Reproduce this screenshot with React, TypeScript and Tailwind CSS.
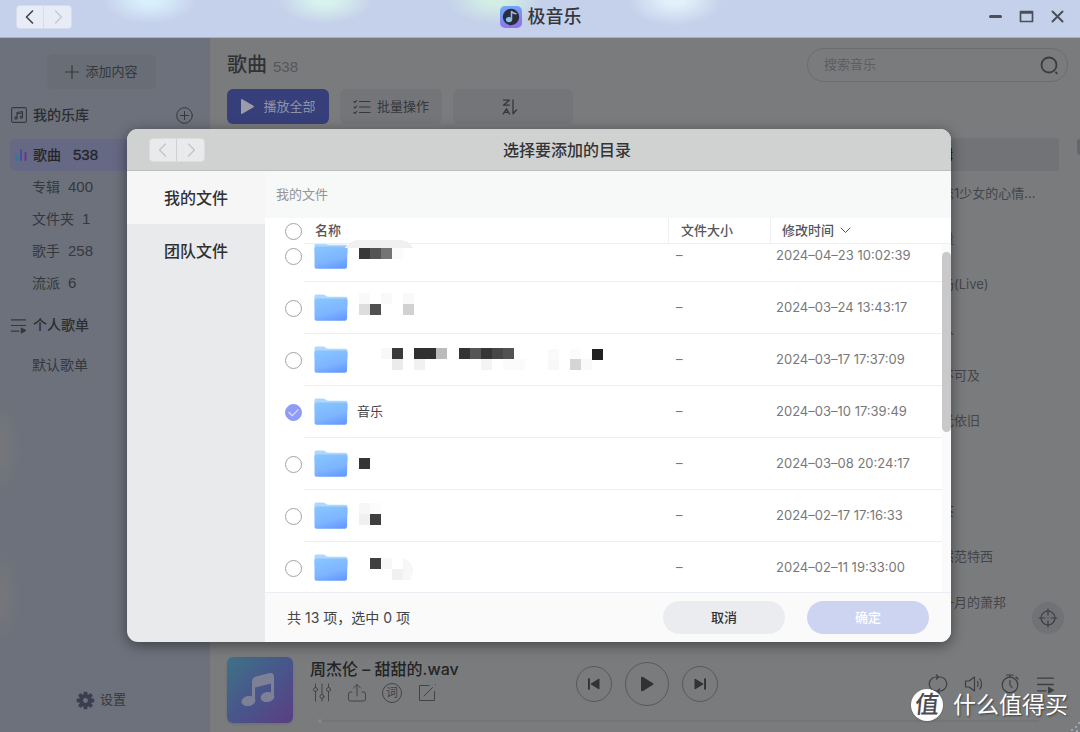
import { useEffect, useRef, type ReactNode } from "react";

type Cell = [x: number, y: number, w: number, fill: string];

interface Folder {
  modified: string;
  name?: string;
  checked?: boolean;
  mask?: Cell[];
  shape?: { d: string; fill: string };
}

const folders: Folder[] = [
  {
    modified: "2024–04–23 10:02:39",
    mask: [[11, 6, 11, "#383838"], [22, 6, 11, "#545454"], [33, 6, 11, "#747474"], [44, 6, 11, "#fbfbfb"]],
    shape: { d: "M-3 6C1 0 5-2 12-2H50C58-2 63 1 65 6Z", fill: "#f0f0f0" },
  },
  {
    modified: "2024–03–24 13:43:17",
    mask: [
      [11, -1, 11, "#f9f9f9"], [33, -1, 11, "#f9f9f9"], [55, -1, 11, "#f9f9f9"],
      [11, 10, 11, "#dddddd"], [22, 10, 11, "#505050"], [55, 10, 11, "#d1d1d1"],
    ],
  },
  {
    modified: "2024–03–17 17:37:09",
    mask: [
      [33, 2, 11, "#f8f8f8"], [44, 2, 11, "#3a3a3a"], [66, 2, 22, "#303030"], [88, 2, 11, "#bbbbbb"],
      [111, 2, 11, "#333333"], [122, 2, 11, "#565656"], [133, 2, 11, "#363636"], [144, 2, 11, "#474747"], [155, 2, 11, "#525252"],
      [200, 3, 11, "#fafafa"], [222, 3, 11, "#fcfcfc"], [244, 3, 11, "#222222"],
      [44, 13, 11, "#ebebeb"], [66, 13, 11, "#f1f1f1"], [133, 13, 11, "#f4f4f4"], [155, 13, 22, "#fbfbfb"],
      [200, 13, 11, "#f8f8f8"], [222, 13, 11, "#d5d5d5"], [233, 13, 11, "#f9f9f9"],
    ],
  },
  { modified: "2024–03–10 17:39:49", name: "音乐", checked: true },
  { modified: "2024–03–08 20:24:17", mask: [[11, 8, 11, "#353535"]] },
  {
    modified: "2024–02–17 17:16:33",
    mask: [[11, 1, 11, "#f7f7f7"], [22, 1, 11, "#fcfcfc"], [11, 12, 11, "#f0f0f0"], [22, 12, 11, "#3f3f3f"]],
  },
  {
    modified: "2024–02–11 19:33:00",
    mask: [[22, 4, 11, "#404040"], [33, 4, 11, "#f7f7f7"], [44, 15, 11, "#f1f1f1"]],
    shape: { d: "M55 4Q63 6 65 15V19L62 26H55Z", fill: "#f7f7f7" },
  },
];

const albums = ["初恋1少女的心情…", "琴量", "现场(Live)", "美人", "遥不可及", "风光依旧", "", "红茶", "依然范特西", "十一月的萧邦"];

const library = [
  ["专辑", "400"],
  ["文件夹", "1"],
  ["歌手", "258"],
  ["流派", "6"],
];

function Icon({ size, box = 20, width = 1, className = "", children }: { size: number; box?: number; width?: number; className?: string; children: ReactNode }) {
  return (
    <svg width={size} height={size} viewBox={`0 0 ${box} ${box}`} fill="none" stroke="currentColor" strokeWidth={width} strokeLinecap="round" strokeLinejoin="round" aria-hidden="true" className={`shrink-0 ${className}`}>
      {children}
    </svg>
  );
}

function PlaylistIcon({ size }: { size: number }) {
  return (
    <Icon size={size} box={18} width={1.2}>
      <path d="M1.500 3H16.500M1.500 9H16.500M1.500 15H9.500" />
      <path d="M12 11.800V17L16.500 14.400Z" fill="currentColor" />
    </Icon>
  );
}

function FolderIcon({ id }: { id: string }) {
  return (
    <svg width="34" height="27" viewBox="0 0 34 27" className="shrink-0" aria-hidden="true">
      <defs>
        <linearGradient id={id} x1="0.3" y1="0" x2="0.7" y2="1">
          <stop offset="0" stopColor="#86c4ff" />
          <stop offset="0.6" stopColor="#7eb5ff" />
          <stop offset="1" stopColor="#649aff" />
        </linearGradient>
      </defs>
      <path d="M0.500 2Q0.500 0.500 2 0.500H9.500Q10.500 0.500 11.500 1.500T14 2.700H31.500Q33.500 2.700 33.500 4.500V12H0.500Z" fill="#afd7fe" />
      <path d="M0.500 6.500Q0.500 4.500 2.500 4.500H31.500Q33.500 4.500 33.500 6.500L33 24.500Q33 26.800 31 26.800H2.500Q0.500 26.800 0.500 24.800Z" fill={`url(#${id})`} />
    </svg>
  );
}

function HistoryButtons({ active }: { active?: boolean }) {
  return (
    <div className={`flex h-6 w-fit overflow-hidden rounded border ${active ? "border-[#d6dcea] bg-[#e7ecf7]" : "border-[#dcdcde] bg-[#e9eaec]"}`}>
      <button aria-label="后退" className={`flex w-[27px] items-center justify-center border-r ${active ? "border-[#d6dcea] text-[#45484e]" : "border-[#cfd0d2] text-[#c2c3c5]"}`}>
        <Icon size={16} box={16} width={active ? 1.7 : 1.2}><path d="M10.500 2L4.500 8L10.500 14" /></Icon>
      </button>
      <button aria-label="前进" className={`flex w-[27px] items-center justify-center ${active ? "text-[#c3c7cf]" : "text-[#c2c3c5]"}`}>
        <Icon size={16} box={16} width={1.2}><path d="M5.500 2L11.500 8L5.500 14" /></Icon>
      </button>
    </div>
  );
}

function TitleBar() {
  return (
    <header className="grid h-[38px] shrink-0 grid-cols-[1fr_auto_1fr] items-center border-b border-[#a9b0bf] bg-[#c5d0ea] bg-[radial-gradient(ellipse_48px_24px_at_150px_0px,#d9effd_20%,transparent),radial-gradient(ellipse_48px_24px_at_325px_0px,#d8f3ee_20%,transparent),radial-gradient(ellipse_48px_24px_at_495px_0px,#d3eee5_20%,transparent),radial-gradient(ellipse_48px_26px_at_675px_0px,#e2f0fa_20%,transparent)] pb-1 pl-4 pr-[15px]">
      <HistoryButtons active />
      <div className="flex items-center gap-1.5">
        <svg width="22" height="22" viewBox="0 0 22 22" aria-hidden="true">
          <defs>
            <linearGradient id="logo-bg" x1="0" y1="0" x2="0.3" y2="1">
              <stop offset="0" stopColor="#69b2fa" />
              <stop offset="1" stopColor="#8d74ec" />
            </linearGradient>
            <linearGradient id="logo-note" x1="0" y1="1" x2="1" y2="0">
              <stop offset="0" stopColor="#48d8e0" />
              <stop offset="0.45" stopColor="#7bc8f5" />
              <stop offset="1" stopColor="#ff8fa6" />
            </linearGradient>
          </defs>
          <rect width="22" height="22" rx="5" fill="url(#logo-bg)" />
          <circle cx="11" cy="11" r="8.200" fill="#2d2b40" />
          <ellipse cx="9" cy="13.600" rx="3.100" ry="2.700" fill="url(#logo-note)" />
          <path d="M11.500 13.500V5.500Q13 7.500 16 7.800" fill="none" stroke="url(#logo-note)" strokeWidth="1.500" strokeLinecap="round" strokeLinejoin="round" />
        </svg>
        <h1 className="text-lg leading-6 font-medium text-[#34373c]">极音乐</h1>
      </div>
      <div className="flex items-center justify-end gap-4 text-[#4a4f59]">
        <button aria-label="最小化"><Icon size={15} box={15} width={3}><path d="M2.500 7.500H12.500" /></Icon></button>
        <button aria-label="最大化"><Icon size={15} box={15} width={1.700}><path d="M1.500 2.500H13.500V12.500H1.500ZM1.500 3.800H13.500" /></Icon></button>
        <button aria-label="关闭"><Icon size={15} box={15} width={2}><path d="M2.500 2.500L12.500 12.500M12.500 2.500L2.500 12.500" /></Icon></button>
      </div>
    </header>
  );
}

function Sidebar() {
  return (
    <aside className="flex w-[210px] shrink-0 flex-col bg-[#6c717b] bg-[radial-gradient(ellipse_22px_50px_at_0px_410px,#74767a_20%,transparent),radial-gradient(ellipse_22px_50px_at_0px_560px,#74767a_20%,transparent)] pt-4 text-[#35383d]">
      <button className="ml-[47px] flex h-[35px] w-[109px] items-center justify-center gap-1.5 rounded-md bg-[#686d76] text-[13px]">
        <Icon size={14} box={14} width={1.2}><path d="M7 0.600V13.400M0.600 7H13.400" /></Icon>
        添加内容
      </button>
      <div className="mt-[14px] flex h-6 items-center pl-[11px] pr-[17px]">
        <Icon size={16} box={16} width={1.1}>
          <rect x="0.600" y="0.600" width="14.800" height="14.800" rx="1.500" />
          <path d="M6 11V5.500L11.500 4.500V10M6 7L11.500 6" />
          <circle cx="4.900" cy="11" r="1.100" />
          <circle cx="10.400" cy="10.200" r="1.100" />
        </Icon>
        <h2 className="ml-1.5 flex-1 text-sm font-medium text-[#2b2d31]">我的乐库</h2>
        <button aria-label="新建">
          <Icon size={17} box={17}><circle cx="8.500" cy="8.500" r="7.800" /><path d="M8.500 4.500V12.500M4.500 8.500H12.500" /></Icon>
        </button>
      </div>
      <nav className="mt-3 flex flex-col">
        <a href="#songs" className="mx-2.5 flex h-8 items-center rounded-md bg-[#656984] pl-[5px] text-sm font-medium text-[#232529]">
          <svg width="12" height="12" viewBox="0 0 12 12" className="shrink-0 overflow-visible" aria-hidden="true">
            <path d="M1.500 6.500V11" stroke="#277e99" strokeWidth="2" strokeLinecap="round" />
            <path d="M6 1V11" stroke="#4550a5" strokeWidth="2" strokeLinecap="round" />
            <path d="M10.500 4V11" stroke="#6d3095" strokeWidth="2" strokeLinecap="round" />
          </svg>
          <span className="ml-1.5">歌曲</span>
          <span className="ml-3 font-['Liberation_Sans',sans-serif] text-[15px] [-webkit-text-stroke:0.3px]">538</span>
        </a>
        {library.map(([label, count]) => (
          <a key={label} href={`#${label}`} className="flex h-8 items-center gap-2 pl-8 text-sm">
            <span>{label}</span>
            <span className="font-['Liberation_Sans',sans-serif] text-[15px]">{count}</span>
          </a>
        ))}
      </nav>
      <div className="mt-3 flex h-7 items-center gap-1.5 pl-2.5">
        <PlaylistIcon size={17} />
        <h2 className="text-sm font-medium text-[#2b2d31]">个人歌单</h2>
      </div>
      <a href="#default" className="mt-3 flex h-7 items-center pl-8 text-sm">默认歌单</a>
      <button className="mt-auto mb-5 flex h-6 items-center gap-[5px] pl-[76px] text-[13px]">
        <svg width="19" height="19" viewBox="-10 -10 20 20" fill="#3b3d50" aria-hidden="true">
          <circle r="4.700" fill="none" stroke="#3b3d50" strokeWidth="4.200" />
          {[0, 45, 90, 135, 180, 225, 270, 315].map((angle) => (
            <rect key={angle} x="-2" y="-9.300" width="4" height="4" rx="1.200" transform={`rotate(${angle})`} />
          ))}
        </svg>
        设置
      </button>
    </aside>
  );
}

function SongList() {
  return (
    <section className="relative flex flex-1 flex-col pl-[17px]">
      <div className="mt-2.5 flex h-[34px] items-center justify-between pr-3">
        <div className="flex items-baseline gap-1.5">
          <h2 className="text-xl font-medium text-[#303234]">歌曲</h2>
          <span className="font-['Liberation_Sans',sans-serif] text-[15px] text-[#55575b]">538</span>
        </div>
        <label className="flex h-[34px] w-[261px] items-center rounded-full border border-[#6c6d70] pl-4 pr-2 text-[#3a3c3f]">
          <input type="text" aria-label="搜索音乐" placeholder="搜索音乐" className="min-w-0 flex-1 bg-transparent text-[13px] outline-none placeholder:text-[#5c5e62]" />
          <Icon size={19} box={19} width={1.800}><circle cx="9" cy="9" r="7.500" /><path d="M16 16.500L16.800 17.300" /></Icon>
        </label>
      </div>
      <div className="mt-[7px] flex gap-[11px] text-[13px] text-[#35373a]">
        <button className="flex h-[35px] w-[102px] items-center justify-center gap-2 rounded-md bg-[#363f79] text-[#8e92a8]">
          <svg width="15" height="17" viewBox="0 0 15 17" fill="#9a9ca8" aria-hidden="true"><path d="M1 2Q1 .6 2.300 1.200L13.500 7.800Q14.500 8.500 13.500 9.200L2.300 15.800Q1 16.400 1 15Z" /></svg>
          播放全部
        </button>
        <button className="flex h-[35px] w-[102px] items-center justify-center gap-1.5 rounded-md bg-[#737579]">
          <Icon size={18} box={18} width={1.1}>
            <path d="M6.500 3.500H17M6.500 9H17M6.500 14.500H17M1 3.500L2 4.500L3.800 2.500M1 9L2 10L3.800 8M1 14.500L2 15.500L3.800 13.500" />
          </Icon>
          批量操作
        </button>
        <button aria-label="排序" className="flex h-[35px] w-[120px] items-center justify-center rounded-md bg-[#737579] pr-1.5">
          <Icon size={16} box={16} width={1.3}>
            <path d="M1.500 1.200H7.300L1.500 6.200H7.300M1.200 15L4.400 9.800L7.600 15M2.600 13.300H6.200M11 1V14.800L14.500 11" />
          </Icon>
        </button>
      </div>
      <div className="mt-[14px] mr-[21px] h-[33px] rounded-sm bg-[#727376] pr-[106px] text-right text-[13px] leading-[33px]">专辑</div>
      <ul className="flex flex-1 flex-col pr-[41px] text-[13px] text-[#44464a]">
        {albums.map((album, i) => (
          <li key={i} className="flex flex-1 items-center justify-end"><span className="w-[111px] whitespace-nowrap">{album}</span></li>
        ))}
      </ul>
      <div className="absolute top-[101px] right-0 h-4 w-[3px] rounded-l bg-[#66676a]" />
      <button aria-label="定位当前歌曲" className="absolute right-4 bottom-[-9px] flex size-8 items-center justify-center rounded-full bg-[#717276] text-[#3b3d42]">
        <Icon size={20} width={1.2}><circle cx="10" cy="10" r="7" /><path d="M10 1V7M10 13V19M1 10H7M13 10H19M10 10V10.100" /></Icon>
      </button>
    </section>
  );
}

function Player() {
  return (
    <footer className="grid h-[107px] shrink-0 grid-cols-[1fr_auto_1fr] content-start items-center pt-8 pr-[13px] pl-[17px] text-[#35373a]">
      <div className="flex items-start gap-[17px]">
        <svg width="66" height="66" viewBox="0 0 66 66" className="rounded-md shadow" aria-hidden="true">
          <defs>
            <linearGradient id="cover" x1="0" y1="0" x2="1" y2="1">
              <stop offset="0" stopColor="#3e7286" />
              <stop offset="0.5" stopColor="#48568b" />
              <stop offset="1" stopColor="#5b3e82" />
            </linearGradient>
          </defs>
          <rect width="66" height="66" fill="url(#cover)" />
          <path d="M26.500 43V25Q26.500 22 29.500 21L43 17.500Q45.500 17 45.500 20V39" fill="none" stroke="#7e8096" strokeWidth="3" />
          <path d="M26 23L46 18V26L26 31Z" fill="#7e8096" />
          <ellipse cx="21.500" cy="44" rx="7" ry="5" transform="rotate(-12 21.500 44)" fill="#7e8096" />
          <ellipse cx="40.500" cy="40" rx="7" ry="5" transform="rotate(-12 40.500 40)" fill="#7e8096" />
        </svg>
        <div>
          <div className="text-base leading-6 font-medium whitespace-nowrap text-[#232426]">周杰伦 – 甜甜的.wav</div>
          <div className="mt-0.5 flex items-center gap-[15px] pl-0.5 text-[#424447]">
            <button aria-label="均衡器"><Icon size={20}><path d="M3.500 1V4.500M3.500 8.500V18M10 1V11.500M10 15.500V18M16.500 1V4.500M16.500 8.500V18" /><circle cx="3.500" cy="6.500" r="2" /><circle cx="10" cy="13.500" r="2" /><circle cx="16.500" cy="6.500" r="2" /></Icon></button>
            <button aria-label="分享"><Icon size={20}><path d="M10 13V1.500M6.500 5L10 1.500L13.500 5M5 9H3.500Q1.500 9 1.500 11V16Q1.500 18 3.500 18H16.500Q18.500 18 18.500 16V11Q18.500 9 16.500 9H15" /></Icon></button>
            <button aria-label="歌词" className="flex size-5 items-center justify-center rounded-full border border-current text-xs leading-none">词</button>
            <button aria-label="编辑"><Icon size={20}><path d="M12 2.500H2.500V17.500H17.500V8.500M7 13L15.500 4.500M18 2L18.300 1.700" /></Icon></button>
          </div>
        </div>
      </div>
      <div className="flex items-center gap-[13px] pb-3 text-[#303234]">
        <button aria-label="上一首" className="flex size-9 items-center justify-center rounded-full border border-[#58595c]">
          <svg width="14" height="14" viewBox="0 0 14 14" fill="currentColor" aria-hidden="true"><rect x="1" y="1.300" width="1.900" height="11.400" rx="0.600" /><path d="M12.500 2.500V11.500Q12.500 12.700 11.300 12.100L4 7.600Q3.200 7 4 6.400L11.300 1.900Q12.500 1.300 12.500 2.500Z" /></svg>
        </button>
        <button aria-label="播放" className="flex size-11 items-center justify-center rounded-full border border-[#58595c]">
          <svg width="16" height="18" viewBox="0 0 16 18" fill="currentColor" aria-hidden="true"><path d="M2 3Q2 1 4 2L14 8.200Q15 9 14 9.800L4 16Q2 17 2 15Z" /></svg>
        </button>
        <button aria-label="下一首" className="flex size-9 items-center justify-center rounded-full border border-[#58595c]">
          <svg width="14" height="14" viewBox="0 0 14 14" fill="currentColor" aria-hidden="true"><rect x="11.100" y="1.300" width="1.900" height="11.400" rx="0.600" /><path d="M1.500 2.500V11.500Q1.500 12.700 2.700 12.100L10 7.600Q10.800 7 10 6.400L2.700 1.900Q1.500 1.300 1.500 2.500Z" /></svg>
        </button>
      </div>
      <div className="flex items-center justify-end gap-4 pr-3 pb-3 text-[#3d3f42]">
        <button aria-label="循环播放"><Icon size={20} width={1.2}><path d="M8.500 17H8A7 7 0 0 1 4 4.500Q5.500 3 8.500 3H10.500M8.500 1L10.500 3L8.500 5M11.500 3H12A7 7 0 0 1 16 15.500Q14.500 17 11.500 17H9.500M11.500 15L9.500 17L11.500 19" /></Icon></button>
        <button aria-label="音量"><Icon size={20} width={1.2}><path d="M1.500 7V13H5L10.500 17V3L5 7ZM13.500 7.500Q15 10 13.500 12.500M16 5Q19 10 16 15" /></Icon></button>
        <button aria-label="定时"><Icon size={20} width={1.2}><circle cx="10" cy="11" r="7.800" /><path d="M6.500 1H13.500M10 1V3M10 6.500V11L12 13.500M16 3L18 5" /></Icon></button>
        <button aria-label="播放列表"><PlaylistIcon size={19} /></button>
      </div>
      <div className="col-span-3 -mt-1 mr-7 ml-[91px] flex h-0 items-center">
        <span className="size-1 rounded-full bg-[#858689]" />
        <span className="h-0.5 flex-1 bg-[#747578]" />
      </div>
    </footer>
  );
}

function RoundCheck({ label, checked }: { label: string; checked?: boolean }) {
  return (
    <span className="relative block size-[17px]">
      <input type="checkbox" aria-label={label} defaultChecked={checked} className="peer block size-[17px] appearance-none rounded-full border border-[#a3a3a5] bg-white checked:border-[#8f9cf6] checked:bg-[#8f9cf6]" />
      <Icon size={17} box={17} width={1.2} className="pointer-events-none absolute inset-0 hidden text-[#dcdff5] peer-checked:block"><path d="M4 8.500L7.300 11.700L13 5.800" /></Icon>
    </span>
  );
}

function FolderTable() {
  const scroller = useRef<HTMLDivElement>(null);
  useEffect(() => {
    if (scroller.current) scroller.current.scrollTop = 14;
  }, []);
  return (
    <div className="flex min-h-0 flex-1 bg-white">
      <div ref={scroller} className="min-w-0 flex-1 overflow-hidden">
        <table className="w-full table-fixed border-separate border-spacing-0 text-left text-[13px]">
          <thead className="sticky top-0 z-10 bg-white text-[#55565a]">
            <tr className="h-[26px]">
              <th className="w-[39px] p-0 pl-5"><RoundCheck label="全选" /></th>
              <th className="border-b border-[#eeeef4] p-0 pl-[11px] font-medium">名称</th>
              <th className="w-[102px] border-b border-l border-[#eeeef4] p-0 pl-3 font-medium">文件大小</th>
              <th className="w-[172px] border-b border-l border-[#eeeef4] p-0 pl-[11px] font-medium">
                <button className="flex items-center gap-1.5">
                  修改时间
                  <Icon size={11} box={11}><path d="M1 3L5.500 7.500L10 3" /></Icon>
                </button>
              </th>
            </tr>
          </thead>
          <tbody className="text-[#77787a]">
            {folders.map((folder, i) => (
              <tr key={folder.modified} className="h-[52px]">
                <td className="p-0 pl-5"><RoundCheck label={folder.name ?? `文件夹 ${i + 1}`} checked={folder.checked} /></td>
                <td className="border-b border-[#eeeef4] p-0 pl-2.5">
                  <div className="flex items-center">
                    <FolderIcon id={`folder-${i}`} />
                    {folder.name && <span className="ml-[9px] text-[#444548]">{folder.name}</span>}
                    {folder.mask && (
                      <svg width="270" height="27" className="relative z-20 overflow-visible" shapeRendering="crispEdges" aria-hidden="true">
                        {folder.shape && <path d={folder.shape.d} fill={folder.shape.fill} />}
                        {folder.mask.map(([x, y, w, fill]) => <rect key={`${x}-${y}`} x={x} y={y} width={w} height="11" fill={fill} />)}
                      </svg>
                    )}
                  </div>
                </td>
                <td className="border-b border-[#eeeef4] p-0 pl-2">–</td>
                <td className="border-b border-[#eeeef4] p-0 pl-1.5 whitespace-nowrap">{folder.modified}</td>
              </tr>
            ))}
          </tbody>
        </table>
      </div>
      <div className="flex w-[9px] shrink-0 flex-col">
        <div className="h-[26px] border-b border-[#eeeef4]" />
        <div className="flex-1 bg-[#fafafa] pt-2">
          <div className="h-[180px] rounded-full bg-[#c9c9ca]" />
        </div>
      </div>
    </div>
  );
}

function FolderDialog() {
  return (
    <div role="dialog" aria-label="选择要添加的目录" className="flex h-[513px] w-[824px] max-w-full flex-col overflow-hidden rounded-[11px] bg-[#e9eaeb] shadow-[0_3px_14px_rgba(0,0,0,0.45)]">
      <div className="flex h-[42px] shrink-0 items-center border-b border-[#bcbdbf] bg-[#d0d1d1] pr-[22px] pl-[22px]">
        <HistoryButtons />
        <h2 className="flex-1 text-center text-base font-medium text-[#333436]">选择要添加的目录</h2>
      </div>
      <div className="flex min-h-0 flex-1">
        <nav className="flex w-[138px] shrink-0 flex-col text-base font-medium text-[#2f3033]">
          <a href="#mine" className="flex h-[53px] items-center justify-center bg-[#f6f6f6]">我的文件</a>
          <a href="#team" className="flex h-[53px] items-center justify-center">团队文件</a>
        </nav>
        <div className="flex min-w-0 flex-1 flex-col">
          <div className="flex h-[47px] shrink-0 items-center bg-[#f7f8f8] pl-[11px] text-[13px] text-[#939496]">我的文件</div>
          <FolderTable />
          <div className="flex h-[50px] shrink-0 items-center border-t border-[#ececf3] bg-[#fafafa] pr-[22px] pl-[22px]">
            <p className="flex-1 text-sm text-[#444548]">共 13 项，选中 0 项</p>
            <button className="h-[33px] w-[122px] rounded-full bg-[#ebecf0] text-[13px] font-medium text-[#2f3033]">取消</button>
            <button className="ml-[22px] h-[33px] w-[122px] rounded-full bg-[#cdd4f1] text-[13px] font-medium text-white">确定</button>
          </div>
        </div>
      </div>
    </div>
  );
}

function Watermark() {
  return (
    <div className="pointer-events-none absolute right-3 bottom-[11px] flex items-center gap-2.5 text-white">
      <span className="flex size-8 items-center justify-center rounded-full bg-white text-2xl leading-none font-medium text-[#4b4c4f] shadow">
        <span className="-skew-x-6">值</span>
      </span>
      <span className="text-[23px] leading-8 [text-shadow:1px_1px_2px_rgba(0,0,0,0.5)]">什么值得买</span>
    </div>
  );
}

export default function App() {
  return (
    <div className="relative flex min-h-screen flex-col overflow-hidden bg-[#79797b] font-[Inter,'Noto_Sans_CJK_SC',sans-serif]">
      <TitleBar />
      <div className="relative flex flex-1">
        <Sidebar />
        <main className="flex min-w-0 flex-1 flex-col bg-[#7a7b7d]">
          <SongList />
          <Player />
        </main>
        <div className="absolute inset-0 flex items-center justify-center pt-px pr-0.5">
          <FolderDialog />
        </div>
      </div>
      <Watermark />
      <svg width="10" height="10" className="absolute right-0 bottom-0" fill="#a9b3d0" aria-hidden="true">
        <circle cx="2" cy="8" r="1" /><circle cx="6" cy="5" r="1" /><circle cx="9" cy="1" r="1" /><circle cx="7" cy="9" r="1" />
      </svg>
    </div>
  );
}
